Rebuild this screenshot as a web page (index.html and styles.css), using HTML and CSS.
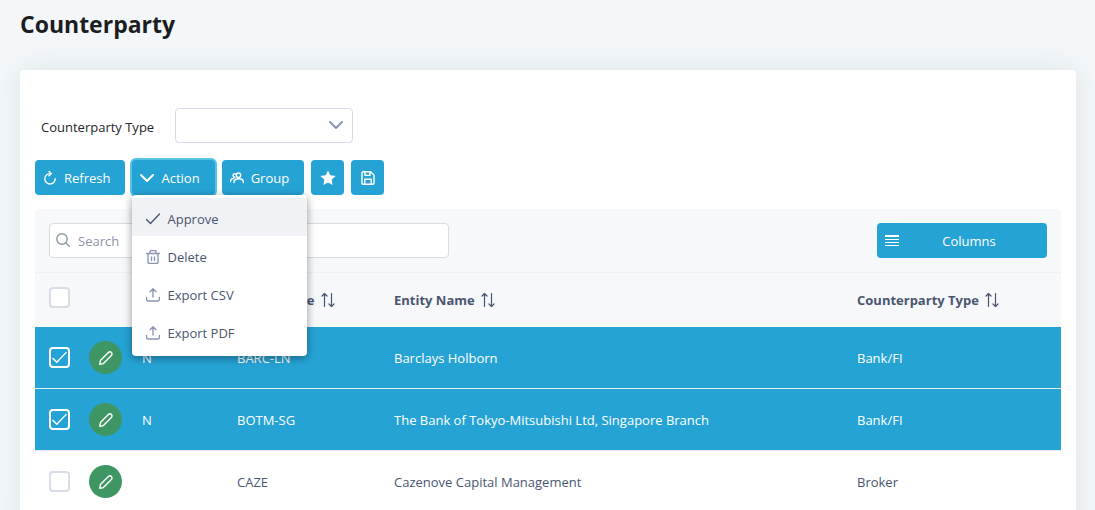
FILE: index.html
```
<!DOCTYPE html>
<html lang="en">
<head>
    <meta charset="UTF-8">
    <title>Counterparty</title>
    <link rel="stylesheet" href="styles.css">
</head>
<body>
<svg class="sprite" aria-hidden="true">
    <symbol id="chevron" viewBox="0 0 14 14"><path d="M1 4l6 6 6-6"/></symbol>
    <symbol id="check" viewBox="0 0 14 14"><path d="M.5 7.5l4 4 9-9.5"/></symbol>
    <symbol id="upload" viewBox="0 0 14 14"><path d="M.6 9.5v2q0 1.5 1.5 1.5h9.8q1.5 0 1.5-1.5v-2M7 9V.8M4 3.8l3-3 3 3"/></symbol>
    <symbol id="pencil" viewBox="0 0 14 14"><path d="M.8 13.2l.6-3.6 8-8a2.1 2.1 0 0 1 3 3l-8 8z"/></symbol>
    <symbol id="sort" viewBox="0 0 14 14"><path d="M3.5 13.5V.8M1 3l2.5-2.5L6 3M10.5.5v12.7M8 11l2.5 2.5L13 11"/></symbol>
</svg>
<h1>Counterparty</h1>
<div class="card">
    <div class="filter">
        <label for="type">Counterparty Type</label>
        <div class="dropdown">
            <select id="type"><option></option><option>Bank/FI</option><option>Broker</option></select>
            <svg class="icon"><use href="#chevron"/></svg>
        </div>
    </div>
    <div class="toolbar">
        <button class="btn" type="button">
            <svg class="icon" viewBox="0 0 14 14"><path d="M7.5 2.6H7a5.2 5.2 0 1 0 5.2 5.2M6 .4l2.4 2.2L6 4.8"/></svg>Refresh
        </button>
        <div class="action">
            <button class="btn focus" type="button" aria-expanded="true"><svg class="icon bold"><use href="#chevron"/></svg>Action</button>
            <ul class="menu">
                <li><button class="active" type="button"><svg class="icon"><use href="#check"/></svg>Approve</button></li>
                <li><button type="button"><svg class="icon" viewBox="0 0 14 14"><path d="M.5 3.5h13M2 3.5V12q0 1.5 1.5 1.5h7q1.5 0 1.5-1.5V3.5M4 3.5V1.7Q4 .6 5 .6h4q1 0 1 1.1v1.8M5.5 7v3.5M8.5 7v3.5"/></svg>Delete</button></li>
                <li><button type="button"><svg class="icon"><use href="#upload"/></svg>Export CSV</button></li>
                <li><button type="button"><svg class="icon"><use href="#upload"/></svg>Export PDF</button></li>
            </ul>
        </div>
        <button class="btn" type="button">
            <svg class="icon" viewBox="0 0 14 14"><circle cx="8.5" cy="4.2" r="2.2"/><path d="M4 11.5c0-5 9.4-5 9.4 0M.5 10.5c0-2 1.2-3 3-3M5 6.3a1.8 1.8 0 1 1 .8-3.3"/></svg>Group
        </button>
        <button class="btn square" type="button" aria-label="Favourite">
            <svg class="icon fill" viewBox="0 0 14 14"><path d="M7 .5l2 4.2 4.6.6-3.4 3.2.9 4.6L7 10.9l-4.1 2.2.9-4.6L.4 5.3 5 4.7z"/></svg>
        </button>
        <button class="btn square" type="button" aria-label="Save">
            <svg class="icon" viewBox="0 0 14 14"><path d="M2 .8h7.5L13 4v8q0 1.2-1.2 1.2H2.2Q1 13.2 1 12V2Q1 .8 2 .8zM3.8 13V8.2h6.4V13M4 1v3.4h5V1"/></svg>
        </button>
    </div>
    <div class="grid">
        <div class="grid-header">
            <div class="search">
                <svg class="icon" viewBox="0 0 14 14"><circle cx="6" cy="6" r="5.2"/><path d="M10 10l3.6 3.6"/></svg>
                <input type="text" placeholder="Search" aria-label="Search">
            </div>
            <button class="btn columns" type="button">
                <svg class="icon" viewBox="0 0 14 14"><path d="M0 1.5h14M0 2.5h14M0 5.5h14M0 8.5h14M0 11.5h14"/></svg><span>Columns</span>
            </button>
        </div>
        <table>
            <thead>
                <tr>
                    <th class="col-check"><input type="checkbox" aria-label="Select all"></th>
                    <th class="col-edit"></th>
                    <th class="col-flag"></th>
                    <th class="col-short">Short Name <svg class="icon"><use href="#sort"/></svg></th>
                    <th class="col-entity">Entity Name <svg class="icon"><use href="#sort"/></svg></th>
                    <th>Counterparty Type <svg class="icon"><use href="#sort"/></svg></th>
                </tr>
            </thead>
            <tbody>
                <tr class="selected">
                    <td><input type="checkbox" checked aria-label="Select BARC-LN"></td>
                    <td><button class="edit" type="button" aria-label="Edit BARC-LN"><svg class="icon"><use href="#pencil"/></svg></button></td>
                    <td>N</td>
                    <td>BARC-LN</td>
                    <td>Barclays Holborn</td>
                    <td>Bank/FI</td>
                </tr>
                <tr class="selected">
                    <td><input type="checkbox" checked aria-label="Select BOTM-SG"></td>
                    <td><button class="edit" type="button" aria-label="Edit BOTM-SG"><svg class="icon"><use href="#pencil"/></svg></button></td>
                    <td>N</td>
                    <td>BOTM-SG</td>
                    <td>The Bank of Tokyo-Mitsubishi Ltd, Singapore Branch</td>
                    <td>Bank/FI</td>
                </tr>
                <tr>
                    <td><input type="checkbox" aria-label="Select CAZE"></td>
                    <td><button class="edit" type="button" aria-label="Edit CAZE"><svg class="icon"><use href="#pencil"/></svg></button></td>
                    <td></td>
                    <td>CAZE</td>
                    <td>Cazenove Capital Management</td>
                    <td>Broker</td>
                </tr>
            </tbody>
        </table>
    </div>
</div>
</body>
</html>
```
FILE: styles.css
```
*{
    box-sizing: border-box;
    margin: 0;
    padding: 0;
}
html{
    overflow: hidden;
}
body{
    padding: 6px 19px 0 20px;
    background: #f3f7fa;
    color: #4a5670;
    font-family: "Segoe UI", "Open Sans", "Noto Sans", sans-serif;
    font-size: 13px;
    line-height: 20px;
}
button, input, select{
    font: inherit;
}
ul{
    list-style: none;
}
h1{
    color: #1b1d1f;
    font-size: 23px;
    line-height: 36px;
    margin-bottom: 28px;
}
.sprite{
    position: absolute;
    width: 0;
    height: 0;
}
.icon{
    width: 14px;
    height: 14px;
    flex: none;
    fill: none;
    stroke: currentColor;
    stroke-width: 1.4;
    stroke-linecap: round;
    stroke-linejoin: round;
}
.icon.bold{
    stroke-width: 2;
}
.icon.fill{
    width: 16px;
    height: 16px;
    fill: currentColor;
    stroke: none;
}
.card{
    padding: 38px 15px 15px;
    background: #fff;
    border-radius: 4px;
    box-shadow: 0 0 28px rgba(50, 70, 80, .1);
}
.filter{
    display: flex;
    align-items: center;
    gap: 21px;
    padding-left: 6px;
    margin-bottom: 17px;
    color: #222529;
}
.filter label{
    padding-top: 3px;
}
.dropdown{
    position: relative;
    width: 178px;
}
.dropdown select{
    display: block;
    width: 100%;
    height: 35px;
    padding: 0 36px 0 12px;
    appearance: none;
    background: #fff;
    border: 1px solid #d5dae7;
    border-radius: 4px;
}
.dropdown .icon{
    position: absolute;
    right: 10px;
    top: 10px;
    color: #8d95b3;
    stroke-width: 2;
    pointer-events: none;
}
.toolbar{
    display: flex;
    gap: 7px;
    margin-bottom: 14px;
}
.btn{
    display: flex;
    align-items: center;
    gap: 7px;
    height: 35px;
    padding: 0 15px 0 8px;
    background: #26a3d5;
    color: #fff;
    border: 0;
    border-radius: 4px;
    cursor: pointer;
}
.btn.focus{
    box-shadow: 0 0 0 2px #56c5e3;
}
.btn.square{
    width: 33px;
    padding: 0;
    justify-content: center;
}
.action{
    position: relative;
}
.menu{
    position: absolute;
    left: 0;
    top: 35px;
    z-index: 1;
    width: 175px;
    padding: 3px 0 6px;
    background: #fff;
    border-radius: 4px;
    box-shadow: 0 2px 8px rgba(0, 0, 0, .4);
}
.menu button{
    display: flex;
    align-items: center;
    gap: 7px;
    width: 100%;
    height: 38px;
    padding: 4px 14px 0;
    background: none;
    border: 0;
    color: #4a5670;
    cursor: pointer;
}
.menu .icon{
    color: #8d95b3;
}
.menu .active{
    background: #f1f2f6;
}
.menu .active .icon{
    color: #4a5670;
}
.grid{
    border-radius: 4px;
    overflow: hidden;
}
.grid-header{
    display: flex;
    justify-content: space-between;
    padding: 14px;
    background: #f7f8fa;
    border-bottom: 1px solid #eef0f3;
}
.search{
    position: relative;
    width: 400px;
}
.search input{
    display: block;
    width: 100%;
    height: 35px;
    padding: 0 12px 0 28px;
    border: 1px solid #d8dbe2;
    border-radius: 4px;
}
.search input::placeholder{
    color: #8d95a8;
}
.search .icon{
    position: absolute;
    left: 7px;
    top: 10px;
    color: #8d95a8;
}
.btn.columns{
    width: 170px;
}
.columns .icon{
    stroke-width: 1;
    stroke-linecap: butt;
}
.columns span{
    flex: 1;
}
table{
    width: 100%;
    table-layout: fixed;
    border-collapse: separate;
    border-spacing: 0;
}
th, td{
    padding: 0 0 0 14px;
    text-align: left;
    white-space: nowrap;
}
th{
    height: 54px;
    background: #f7f8fa;
}
td{
    height: 62px;
    border-bottom: 1px solid #e9eaee;
}
th .icon{
    margin-left: 3px;
    vertical-align: -2px;
    stroke-width: 1.2;
}
.col-check{
    width: 40px;
    padding-bottom: 6px;
}
.col-edit{
    width: 53px;
}
.col-flag{
    width: 95px;
}
.col-short{
    width: 157px;
}
.col-entity{
    width: 463px;
}
td input, th input{
    display: block;
    width: 21px;
    height: 21px;
    appearance: none;
    background: #fff;
    border: 2px solid #d9dde7;
    border-radius: 4px;
}
.selected{
    background: #26a3d5;
    color: #fff;
}
.selected input{
    background: #26a3d5 url("data:image/svg+xml,%3Csvg xmlns='http://www.w3.org/2000/svg' viewBox='0 0 14 14'%3E%3Cpath d='M.5 7.5l4 4 9-9.5' fill='none' stroke='white' stroke-width='1.3'/%3E%3C/svg%3E") center / 15px no-repeat;
    border-color: #fff;
}
.edit{
    display: flex;
    align-items: center;
    justify-content: center;
    width: 33px;
    height: 33px;
    background: #3f9665;
    color: #fff;
    border: 0;
    border-radius: 50%;
    cursor: pointer;
}
```
